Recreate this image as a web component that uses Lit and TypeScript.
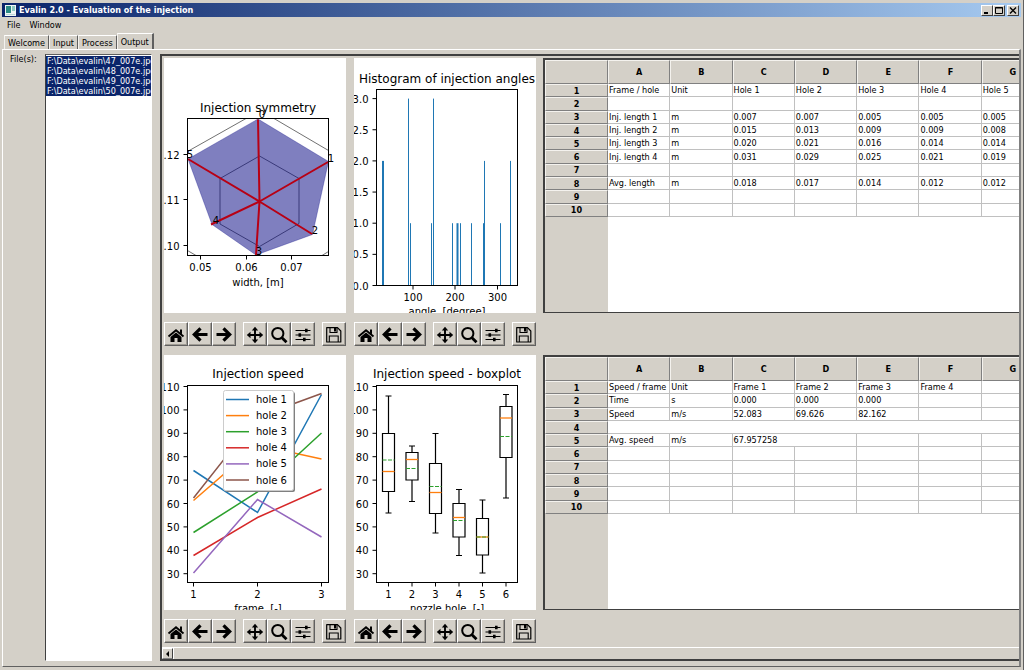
import { LitElement, html, svg, css } from "lit";
import { customElement, property, state } from "lit/decorators.js";
import { classMap } from "lit/directives/class-map.js";

const BLUE = "#1f77b4";
const ORANGE = "#ff7f0e";
const GREEN = "#2ca02c";
const RED = "#d62728";
const PURPLE = "#9467bd";
const BROWN = "#8c564b";

type Tick = [number, string];
interface Frame {
  left: number;
  right: number;
  top: number;
  bottom: number;
  title: string;
  titleY: number;
  label: string;
  labelY: number;
  xTicks: Tick[];
  yTicks: Tick[];
}

/** Axes box with ticks, title and x label, shared by every plot. */
const axes = (f: Frame) => {
  const mid = (f.left + f.right) / 2;
  return svg`
    <rect class="axis" x=${f.left} y=${f.top} width=${f.right - f.left} height=${f.bottom - f.top}></rect>
    ${f.xTicks.map(([x, t]) => svg`
      <path class="axis" d="M${x} ${f.bottom}v4"></path>
      <text class="mid" x=${x} y=${f.bottom + 15}>${t}</text>`)}
    ${f.yTicks.map(([y, t]) => svg`
      <path class="axis" d="M${f.left} ${y}h-4"></path>
      <text class="end" x=${f.left - 8} y=${y + 4}>${t}</text>`)}
    <text class="title mid" x=${mid} y=${f.titleY}>${f.title}</text>
    <text class="mid" x=${mid} y=${f.labelY}>${f.label}</text>`;
};

const speedY = (v: number) => 148.5 + (60 - v) * 2.34;
const speedTicks: Tick[] = [110, 100, 90, 80, 70, 60, 50, 40, 30].map((v) => [speedY(v), String(v)]);

const symmetryPlot = () => svg`
  <path class="thin" d="M23.5 93.5L82 60.5M110 60.5L164.5 92.5M23.5 192.5L32 197.5M164.5 193.5L158 197.5
    M95.5 98L135 120.500V165.500L95.500 188.500L56 166V120.500Z"></path>
  <path class="area" d="M94 61L164.500 103.500L148.500 176.500L92 197L48 166.500L24 101Z"></path>
  <path class="spokes" d="M94 61.500L95.500 143.500M164 104L95.500 143.500M148 176L95.500 143.500M92 197L95.500 143.500M47 166.500L95.500 143.500M24 101L95.500 143.500"></path>
  ${([[98, 60, "0"], [167, 104, "1"], [151, 176, "2"], [95, 197, "3"], [52, 166, "4"], [26, 100, "5"]] as [number, number, string][])
    .map(([x, y, t]) => svg`<text class="mid" x=${x} y=${y}>${t}</text>`)}
  ${axes({
    left: 23.5, right: 164.5, top: 60.5, bottom: 197.5,
    title: "Injection symmetry", titleY: 54, label: "width, [m]", labelY: 228,
    xTicks: [[36.5, "0.05"], [82.5, "0.06"], [127.5, "0.07"]],
    yTicks: [[96.5, "0.12"], [141.5, "0.11"], [187.5, "0.10"]],
  })}`;

const bins: [number, number, number][] = [
  [29, 2, 2], [54.5, 3, 1], [56.5, 1, 1], [77.5, 1, 1], [79.5, 3, 1], [98.5, 1, 1], [103.5, 1, 2],
  [106.5, 1, 1], [117.5, 1, 1], [129.5, 1, 1], [130.5, 2, 1], [146.5, 1, 1], [156.5, 2, 1],
];

const histogramPlot = () => svg`
  ${bins.map(([x, n, w]) => svg`<rect fill=${BLUE} x=${x - w / 2} y=${227.5 - n * 62.3} width=${w} height=${n * 62.3}></rect>`)}
  ${axes({
    left: 22.5, right: 163.5, top: 31.5, bottom: 227.5,
    title: "Histogram of injection angles", titleY: 25, label: "angle, [degree]", labelY: 257,
    xTicks: [[59, "100"], [101, "200"], [143.5, "300"]],
    yTicks: [3, 2.5, 2, 1.5, 1, 0.5, 0].map((v) => [227.5 - v * 62.3, v.toFixed(1)] as Tick),
  })}`;

const series: [string, string, string][] = [
  ["hole 1", BLUE, "29.5,115.5 93.5,157.5 157.5,39.5"],
  ["hole 2", ORANGE, "29.5,145.5 93.5,90 157.5,104"],
  ["hole 3", GREEN, "29.5,177.5 93.5,137 157.5,78"],
  ["hole 4", RED, "29.5,200.5 93.5,162.5 157.5,134"],
  ["hole 5", PURPLE, "29.5,218 93.5,144.5 157.5,182"],
  ["hole 6", BROWN, "29.5,143 93.5,62 157.5,38.5"],
];

const speedPlot = () => svg`
  ${series.map(([, c, pts]) => svg`<polyline class="line" stroke=${c} points=${pts}></polyline>`)}
  <rect class="shade" x="61" y="37" width="70" height="100" rx="2"></rect>
  <rect class="legend" x="59.500" y="35.500" width="70" height="100" rx="2"></rect>
  ${series.map(([name, c], i) => svg`
    <path class="line" stroke=${c} d="M62 ${44.5 + i * 16.1}h23"></path>
    <text x="92" y=${48 + i * 16.1}>${name}</text>`)}
  ${axes({
    left: 23.5, right: 164.5, top: 30.5, bottom: 227.5,
    title: "Injection speed", titleY: 23, label: "frame, [-]", labelY: 257,
    xTicks: [[29.5, "1"], [93.5, "2"], [157.5, "3"]],
    yTicks: speedTicks,
  })}`;

// centre, upper whisker, box top, median, mean, box bottom, lower whisker
const boxes: number[][] = [
  [34.5, 41, 78.5, 116.5, 105, 136.5, 158],
  [58, 91, 97.5, 104.5, 113.5, 125, 146.5],
  [81.5, 78.5, 108.5, 137.5, 131.5, 158.5, 178],
  [105, 134.5, 148.5, 162.5, 165.5, 182, 200.5],
  [128.5, 145, 163.5, 182, 182, 200, 218],
  [152, 39.5, 51.5, 63, 81.5, 102.5, 143],
];

const boxPlot = () => svg`
  ${boxes.map(([x, hi, top, med, mean, bot, lo]) => svg`
    <path class="box" d="M${x - 3} ${hi}h6M${x} ${hi}V${top}M${x - 6} ${top}h12V${bot}h-12ZM${x} ${bot}V${lo}M${x - 3} ${lo}h6"></path>
    <path class="median" d="M${x - 6} ${med}h12"></path>
    <path class="mean" d="M${x - 6} ${mean}h12"></path>`)}
  ${axes({
    left: 22.5, right: 163.5, top: 30.5, bottom: 227.5,
    title: "Injection speed - boxplot", titleY: 23, label: "nozzle hole, [-]", labelY: 257,
    xTicks: boxes.map(([x], i) => [x, String(i + 1)] as Tick),
    yTicks: speedTicks,
  })}`;

const plots = { symmetry: symmetryPlot, histogram: histogramPlot, speed: speedPlot, boxplot: boxPlot };

@customElement("plot-canvas")
export class PlotCanvas extends LitElement {
  @property() kind: keyof typeof plots = "symmetry";
  static styles = css`
    :host { display: block; background: #fff; overflow: hidden; }
    .plot { display: block; width: 100%; overflow: hidden; }
    text { font: 10px "DejaVu Sans", sans-serif; fill: #000; }
    .title { font-size: 12px; }
    .mid { text-anchor: middle; }
    .end { text-anchor: end; }
    .axis { fill: none; stroke: #000; stroke-width: 1; }
    .thin { fill: none; stroke: #333; stroke-width: 0.7; }
    .area { fill: #000080; fill-opacity: 0.5; stroke: #000080; stroke-opacity: 0.3; stroke-width: 1; }
    .spokes { fill: none; stroke: #b80014; stroke-width: 2; }
    .line { fill: none; stroke-width: 1.5; }
    .shade { fill: #808080; }
    .legend { fill: #fff; stroke: #ccc; }
    .box { fill: none; stroke: #000; stroke-width: 1.2; }
    .median { stroke: #ff7f0e; stroke-width: 1.3; }
    .mean { stroke: #2ca02c; stroke-width: 1.2; stroke-dasharray: 4 1.5; }
  `;
  render() {
    return html`<svg class="plot" viewBox="0 0 182 255" role="img" aria-label=${this.kind}>${plots[this.kind]()}</svg>`;
  }
}

const icons = {
  Home: svg`
    <path d="M4.500 14.500L12 8.300L19.500 14.500" fill="none" stroke="#000" stroke-width="1.900"></path>
    <path d="M16 7.500h2v5l-2-1.800z"></path>
    <path d="M6.500 15L12 10.600L17.500 15V20H13.500V16H10.500V20H6.500Z"></path>`,
  Back: svg`<path d="M12.500 6.300L6.300 12.500L12.500 18.700M6.500 12.500H19.500" fill="none" stroke="#000" stroke-width="3.200"></path>`,
  Forward: svg`<path d="M11.500 6.300L17.700 12.500L11.500 18.700M17.500 12.500H4.500" fill="none" stroke="#000" stroke-width="3.200"></path>`,
  Pan: svg`
    <path d="M12 7V19M6 13H18" stroke="#000" stroke-width="1.900"></path>
    <path d="M12 4.800L15.200 8.500H8.800ZM12 21.200L15.200 17.500H8.800ZM3.800 13L7.500 9.800V16.200ZM20.200 13L16.500 9.800V16.200Z"></path>`,
  Zoom: svg`
    <circle cx="10.800" cy="11.500" r="5.600" fill="none" stroke="#000" stroke-width="2"></circle>
    <path d="M14.700 15.400L19.500 20.300" stroke="#000" stroke-width="2.800"></path>`,
  Subplots: svg`
    <path d="M4.500 8.500H19.500M4.500 13H19.500M4.500 17.500H19.500" stroke="#000" stroke-width="1.100"></path>
    <path d="M14 6.800h2.600v3.400H14ZM7.500 11.300h2.600v3.400H7.500ZM12 15.800h2.600v3.400H12Z"></path>`,
  Save: svg`
    <path d="M4.700 5.700H15.500L18.800 9V20H4.700Z" fill="none" stroke="#000" stroke-width="1.200" stroke-linejoin="round"></path>
    <path d="M8 5.700V10.500H15V5.700M7.300 20V14H16.200V20" fill="none" stroke="#000" stroke-width="1.100"></path>
    <path d="M12 6h2v3.500h-2z"></path>`,
};
type IconName = keyof typeof icons;
const groups: IconName[][] = [["Home", "Back", "Forward"], ["Pan", "Zoom", "Subplots"], ["Save"]];

@customElement("plot-toolbar")
export class PlotToolbar extends LitElement {
  static styles = css`
    :host { display: flex; justify-content: space-between; }
    .group { display: flex; }
    .tool {
      box-sizing: border-box; width: 24px; height: 24px; padding: 0; background: #d4d0c8;
      border: 1px solid; border-color: #fff #606060 #606060 #fff; box-shadow: inset -1px -1px #a09c94;
    }
    .icon { display: block; width: 22px; height: 22px; }
  `;
  render() {
    return groups.map((g) => html`<div class="group">${g.map((name) => html`
      <button class="tool" title=${name} aria-label=${name}>
        <svg class="icon" viewBox="1 1 22 22">${icons[name]}</svg>
      </button>`)}</div>`);
  }
}

interface Cell { text: string; span?: number; }
const columns = ["A", "B", "C", "D", "E", "F", "G"];

@customElement("data-sheet")
export class DataSheet extends LitElement {
  @property({ attribute: false }) rows: (string | Cell)[][] = [];
  static styles = css`
    :host {
      display: block; overflow: hidden; box-sizing: border-box;
      border: solid #404040; border-width: 2px 0 1px 2px;
      background: linear-gradient(90deg, #d4d0c8 63px, #fff 63px);
    }
    .sheet { table-layout: fixed; width: 499px; height: 157px; border-spacing: 0; color: #000; }
    .corner, .col { height: 24px; }
    th, td { box-sizing: border-box; padding: 0; line-height: 10px; white-space: nowrap; }
    th {
      background: #d4d0c8; font-weight: bold; text-align: center;
      border: 1px solid; border-color: #f4f2ee #808080 #808080 #f4f2ee;
    }
    .corner { width: 63px; }
    td {
      text-align: left; padding-left: 1px; overflow: hidden; background: #fff;
      border: solid #c0c0c0; border-width: 0 1px 1px 0;
    }
  `;
  render() {
    const body = Array.from({ length: 10 }, (_, i) => this.rows[i] ?? []);
    return html`<table class="sheet">
      <thead><tr><th class="corner"></th>${columns.map((c) => html`<th class="col" scope="col">${c}</th>`)}</tr></thead>
      <tbody>${body.map((row, i) => {
        const cells = row.map((c) => (typeof c === "string" ? { text: c, span: 1 } : { span: 1, ...c }));
        const used = cells.reduce((n, c) => n + c.span, 0);
        const blanks = Array.from({ length: columns.length - used }, () => ({ text: "", span: 1 }));
        return html`<tr><th scope="row">${i + 1}</th>${[...cells, ...blanks].map(
          (c) => html`<td colspan=${c.span}>${c.text}</td>`)}</tr>`;
      })}</tbody>
    </table>`;
  }
}

const lengthRows = [
  ["Frame / hole", "Unit", "Hole 1", "Hole 2", "Hole 3", "Hole 4", "Hole 5"],
  [],
  ["Inj. length 1", "m", "0.007", "0.007", "0.005", "0.005", "0.005"],
  ["Inj. length 2", "m", "0.015", "0.013", "0.009", "0.009", "0.008"],
  ["Inj. length 3", "m", "0.020", "0.021", "0.016", "0.014", "0.014"],
  ["Inj. length 4", "m", "0.031", "0.029", "0.025", "0.021", "0.019"],
  [],
  ["Avg. length", "m", "0.018", "0.017", "0.014", "0.012", "0.012"],
];
const speedRows = [
  ["Speed / frame", "Unit", "Frame 1", "Frame 2", "Frame 3", "Frame 4"],
  ["Time", "s", "0.000", "0.000", "0.000"],
  ["Speed", "m/s", "52.083", "69.626", "82.162"],
  [{ text: "", span: 7 }],
  ["Avg. speed", "m/s", { text: "67.957258", span: 2 }],
];
const files = ["47", "48", "49", "50"].map((n) => `F:\\Data\\evalin\\${n}_007e.jpg`);

@customElement("app-root")
export class AppRoot extends LitElement {
  @state() private tab = "Output";
  static styles = css`
    :host {
      display: flex; flex-direction: column; box-sizing: border-box; min-height: 100vh; padding: 3px 2px 2px;
      background: #d4d0c8; border-right: 1px solid #606060; border-bottom: 1px solid #606060;
      font: 9px/10px "DejaVu Sans Condensed", "DejaVu Sans", sans-serif; color: #000; overflow: hidden;
    }
    button, select { font: inherit; color: inherit; }
    .titlebar {
      display: flex; align-items: center; height: 14px; padding: 0 2px 0 3px;
      background: linear-gradient(90deg, #0a246a, #a6caf0);
    }
    .logo { width: 11px; height: 11px; }
    .caption { flex: 1; margin: 0 0 0 3px; font-size: 9px; line-height: 14px; font-weight: bold; color: #fff; }
    .win {
      width: 12px; height: 11px; padding: 0; background: #d4d0c8;
      border: 1px solid; border-color: #fff #404040 #404040 #fff;
    }
    .win + .close { margin-left: 2px; }
    .glyph { display: block; width: 10px; height: 9px; }
    .menu { display: flex; gap: 9px; padding: 3px 5px; }
    .item { padding: 0; border: 0; background: none; line-height: 10px; }
    .tabs { display: flex; align-items: flex-end; height: 16px; padding: 0 2px; }
    .tab {
      height: 14px; padding: 0 3px; background: none; line-height: 12px;
      border: 1px solid; border-color: #fff #606060 transparent #f4f2ee; border-bottom: 0;
    }
    .tab.on { height: 17px; margin-bottom: -1px; background: #d4d0c8; border-right-width: 2px; }
    .page {
      flex: 1; display: grid; grid-template-columns: 35px 107px minmax(0, 1fr);
      padding: 4px 0 5px 7px; margin-bottom: 1px;
      border: 1px solid; border-color: #fff #808080 #606060 #fff; border-right-width: 2px;
    }
    .list {
      appearance: none; box-sizing: border-box; width: 100%; height: 100%; margin: 0; padding: 1px 0; overflow: hidden;
      background: #fff; border: 1px solid; border-color: #606060 #fff #fff #404040; border-radius: 0; outline: 0;
    }
    .file { padding: 0 1px; min-height: 10px; line-height: 10px; overflow: hidden; }
    .file:checked { background: #0a246a linear-gradient(#0a246a, #0a246a); color: #fff; }
    .view {
      display: flex; flex-direction: column; margin-left: 8px; overflow: hidden;
      border: solid #404040; border-width: 2px 0 2px 2px;
    }
    .results {
      flex: 1; display: grid; grid-template-columns: 182px 182px minmax(0, 1fr); column-gap: 8px;
      grid-template-rows: auto 42px auto 37px; padding-left: 2px; padding-top: 2px; align-content: start;
    }
    .bar { padding-top: 9px; }
    .table { margin-left: -1px; }
    .scroll { display: flex; height: 12px; border-top: 1px solid #fff; box-sizing: border-box; }
    .step {
      width: 11px; padding: 0; background: #d4d0c8; border: 1px solid; border-color: #fff #404040 #808080 #fff;
    }
    .thumb { flex: 1; border-left: 1px solid #fff; }
    .arrow { display: block; width: 9px; height: 8px; }
  `;
  render() {
    return html`
      <header class="titlebar">
        <svg class="logo" viewBox="0 0 11 11" aria-hidden="true">
          <path fill="#eef6f4" d="M0 0h11v11H0z"></path><path fill="#2c8c84" d="M1 1h5v7H1z"></path>
          <path fill="#8cc8c0" d="M7 1h3v5H7z"></path><path fill="#bcd8d8" d="M1 9h9v1H1z"></path>
        </svg>
        <h1 class="caption">Evalin 2.0 - Evaluation of the injection</h1>
        <button class="win" aria-label="Minimize"><svg class="glyph" viewBox="0 0 10 9"><path d="M2 6h4v2H2z"></path></svg></button>
        <button class="win" aria-label="Maximize"><svg class="glyph" viewBox="0 0 10 9"><path d="M1.500 1.500h7v6h-7zM1 2h8" fill="none" stroke="#000"></path></svg></button>
        <button class="win close" aria-label="Close"><svg class="glyph" viewBox="0 0 10 9"><path d="M2 1.500L8 7.500M8 1.500L2 7.500" stroke="#000" stroke-width="1.400"></path></svg></button>
      </header>
      <nav class="menu"><button class="item">File</button><button class="item">Window</button></nav>
      <div class="tabs" role="tablist">
        ${["Welcome", "Input", "Process", "Output"].map((t) => html`
          <button role="tab" aria-selected=${t === this.tab} class=${classMap({ tab: true, on: t === this.tab })}
            @click=${() => (this.tab = t)}>${t}</button>`)}
      </div>
      <main class="page">
        <label class="files" for="files">File(s):</label>
        <select class="list" id="files" multiple size="4">
          ${files.map((f) => html`<option class="file" selected>${f}</option>`)}
        </select>
        <section class="view">
          <div class="results">
            <plot-canvas kind="symmetry"></plot-canvas>
            <plot-canvas kind="histogram"></plot-canvas>
            <data-sheet class="table" .rows=${lengthRows}></data-sheet>
            <plot-toolbar class="bar"></plot-toolbar>
            <plot-toolbar class="bar"></plot-toolbar>
            <span></span>
            <plot-canvas kind="speed"></plot-canvas>
            <plot-canvas kind="boxplot"></plot-canvas>
            <data-sheet class="table" .rows=${speedRows}></data-sheet>
            <plot-toolbar class="bar"></plot-toolbar>
            <plot-toolbar class="bar"></plot-toolbar>
          </div>
          <div class="scroll">
            <button class="step" aria-label="Scroll left"><svg class="arrow" viewBox="0 0 9 8"><path d="M6 1v6L3 4z"></path></svg></button>
            <div class="thumb"></div>
          </div>
        </section>
      </main>`;
  }
}
